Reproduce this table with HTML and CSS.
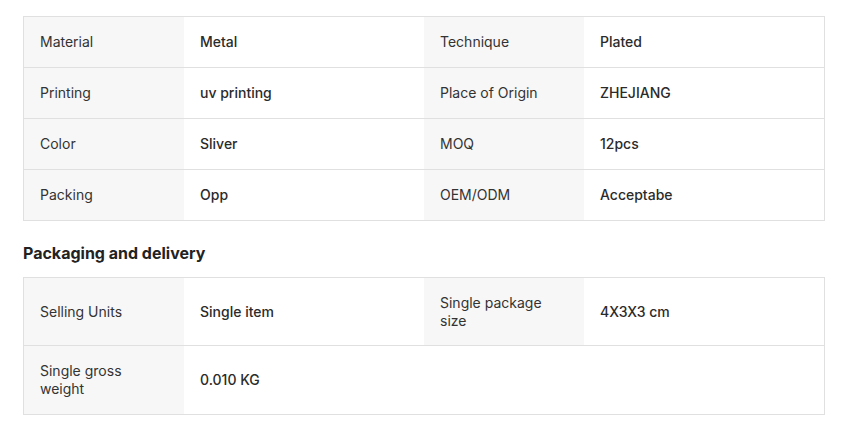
FILE: index.html
```html
<!DOCTYPE html>
<html>
<head>
<meta charset="utf-8">
<link rel="stylesheet" href="styles.css">
</head>
<body>
<div class="page">
  <div class="attrs">
    <div class="row">
      <div class="cell label">Material</div>
      <div class="cell value">Metal</div>
      <div class="cell label">Technique</div>
      <div class="cell value">Plated</div>
    </div>
    <div class="row">
      <div class="cell label">Printing</div>
      <div class="cell value">uv printing</div>
      <div class="cell label">Place of Origin</div>
      <div class="cell value">ZHEJIANG</div>
    </div>
    <div class="row">
      <div class="cell label">Color</div>
      <div class="cell value">Sliver</div>
      <div class="cell label">MOQ</div>
      <div class="cell value">12pcs</div>
    </div>
    <div class="row">
      <div class="cell label">Packing</div>
      <div class="cell value">Opp</div>
      <div class="cell label">OEM/ODM</div>
      <div class="cell value">Acceptabe</div>
    </div>
  </div>
  <h2 class="title">Packaging and delivery</h2>
  <div class="attrs">
    <div class="row tall">
      <div class="cell label">Selling Units</div>
      <div class="cell value">Single item</div>
      <div class="cell label">Single package size</div>
      <div class="cell value">4X3X3 cm</div>
    </div>
    <div class="row">
      <div class="cell label">Single gross weight</div>
      <div class="cell value">0.010 KG</div>
      <div class="cell empty"></div>
      <div class="cell empty"></div>
    </div>
  </div>
</div>
</body>
</html>
```

FILE: styles.css
```css
* { box-sizing: border-box; }
html, body { margin: 0; padding: 0; background: #fff; }
body {
  font-family: Inter, "Noto Sans", sans-serif;
  font-size: 14px;
  line-height: 18px;
  color: #222;
}
.page {
  padding: 16px 0 0 23px;
}
.attrs {
  width: 802px;
  border: 1px solid #e0e0e0;
}
.row {
  display: grid;
  grid-template-columns: 160px 240px 160px 240px;
  border-bottom: 1px solid #e0e0e0;
}
.row:last-child { border-bottom: none; }
.row.tall .cell { padding-bottom: 15px; }
.cell {
  padding: 16px;
  display: flex;
  align-items: center;
}
.label {
  background: #f7f7f7;
  color: #333;
}
.value {
  color: #2b2b2b;
  font-weight: 500;
}
.title {
  margin: 20px 0 12px;
  font-size: 16px;
  line-height: 24px;
  font-weight: 700;
  color: #222;
}
```
